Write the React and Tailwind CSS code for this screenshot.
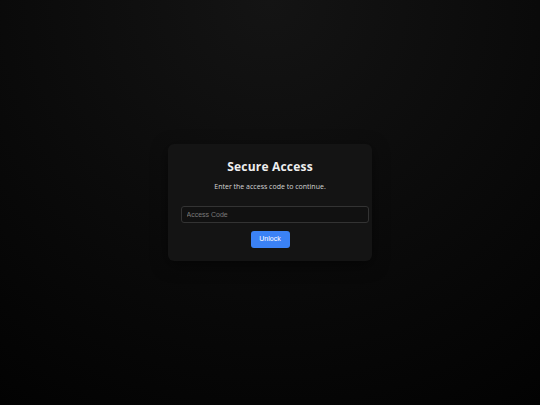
export default function App() {
  return (
    <div className="h-screen w-full flex items-center justify-center bg-[radial-gradient(circle_at_top,#141414_0%,#0a0a0a_55%,#020202_100%)]">
      <div className="w-[204px] px-[12.5px] pt-[15px] pb-[13px] rounded-[6px] bg-[#141414] shadow-[0_4px_16px_rgba(0,0,0,0.5)] text-center">
        <h1 className="text-[12px] leading-[15px] font-bold tracking-[0.2px] text-[#eeeeee] font-['Open_Sans',sans-serif]">
          Secure Access
        </h1>
        <p className="mt-[8.5px] text-[7px] leading-[10px] text-[#d4d4d4] font-['Open_Sans',sans-serif]">
          Enter the access code to continue.
        </p>
        <input
          type="password"
          placeholder="Access Code"
          className="block mt-[13.5px] w-[188px] h-[17.5px] px-[5px] rounded-[3px] border border-[#333333] bg-[#111111] text-[7px] text-[#dddddd] placeholder:text-[#7a7a7a] font-['Liberation_Sans',Arial,sans-serif] outline-none"
        />
        <button className="mt-[7px] h-[17.5px] w-[39px] rounded-[3px] bg-[#3b82f6] text-white text-[7px] font-['Liberation_Sans',Arial,sans-serif]">
          Unlock
        </button>
      </div>
    </div>
  );
}
